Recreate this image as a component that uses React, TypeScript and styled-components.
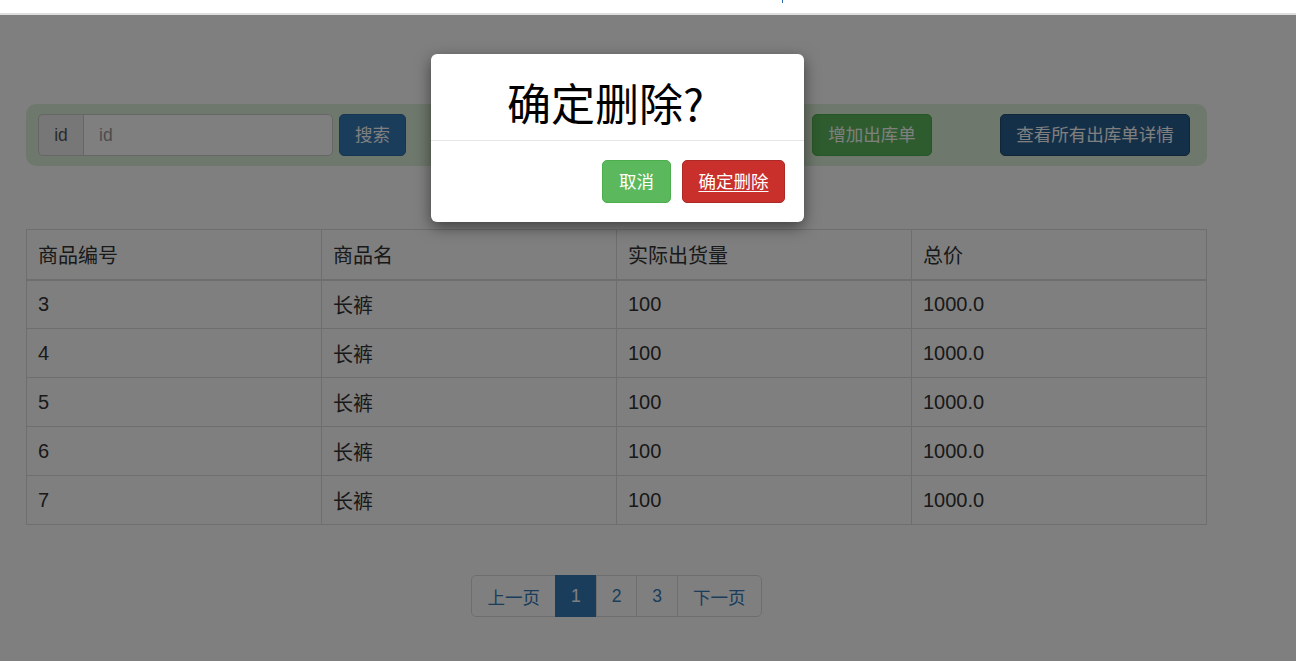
import React from 'react'
import styled, { createGlobalStyle } from 'styled-components'

const GlobalStyle = createGlobalStyle`
  html, body {
    margin: 0;
    padding: 0;
    background: #fff;
    font-family: "Liberation Sans", "Noto Sans CJK SC", sans-serif;
    color: #333;
    overflow: hidden;
  }
  * { box-sizing: border-box; }
`

const rows = [
    { id: 3, name: '长裤', qty: 100, total: '1000.0' },
    { id: 4, name: '长裤', qty: 100, total: '1000.0' },
    { id: 5, name: '长裤', qty: 100, total: '1000.0' },
    { id: 6, name: '长裤', qty: 100, total: '1000.0' },
    { id: 7, name: '长裤', qty: 100, total: '1000.0' },
]

const App = () => {
    const mapRows = rows.map((item) => {
        return (
            <tr key={item.id}>
                <Td>{item.id}</Td>
                <Td>{item.name}</Td>
                <Td>{item.qty}</Td>
                <Td>{item.total}</Td>
            </tr>
        )
    })

    return (
        <>
            <GlobalStyle />
            <TopStrip>
                <Caret />
            </TopStrip>
            <Stage>
                <Content>
                    <Well>
                        <InputGroup>
                            <Addon>id</Addon>
                            <Input placeholder="id" />
                        </InputGroup>
                        <SearchBtn variant="primary">搜索</SearchBtn>
                        <AddBtn variant="success">增加出库单</AddBtn>
                        <DetailBtn variant="dark">查看所有出库单详情</DetailBtn>
                    </Well>
                    <Table>
                        <thead>
                            <tr>
                                <Th>商品编号</Th>
                                <Th>商品名</Th>
                                <Th>实际出货量</Th>
                                <Th>总价</Th>
                            </tr>
                        </thead>
                        <tbody>{mapRows}</tbody>
                    </Table>
                    <Pager>
                        <PageItem>上一页</PageItem>
                        <PageItem active>1</PageItem>
                        <PageItem>2</PageItem>
                        <PageItem>3</PageItem>
                        <PageItem>下一页</PageItem>
                    </Pager>
                </Content>
                <Backdrop />
                <Modal>
                    <ModalHeader>
                        <ModalTitle>确定删除?</ModalTitle>
                    </ModalHeader>
                    <ModalFooter>
                        <Btn variant="success">取消</Btn>
                        <DangerBtn>确定删除</DangerBtn>
                    </ModalFooter>
                </Modal>
            </Stage>
        </>
    )
}

export default App


const TopStrip = styled.div`
  height: 15px;
  background: #fff;
  border-bottom: 2px solid #dedede;
  padding-left: 782px;
`;

const Caret = styled.span`
  display: block;
  width: 1px;
  height: 3px;
  background: #2a6ab0;
`;

const Stage = styled.div`
  position: relative;
  height: 646px;
  overflow: hidden;
`;

const Content = styled.div`
  padding: 89px 0 0 26px;
  width: 1207px;
`;

const Well = styled.div`
  display: flex;
  align-items: center;
  height: 62px;
  padding: 0 17px 0 12px;
  background: #dff0d8;
  border-radius: 10px;
`;

const InputGroup = styled.div`
  display: flex;
  width: 295px;
  height: 42px;
`;

const Addon = styled.span`
  display: flex;
  align-items: center;
  justify-content: center;
  width: 45px;
  background: #eee;
  border: 1px solid #ccc;
  border-right: 0;
  border-radius: 5px 0 0 5px;
  color: #555;
  font-size: 17.5px;
`;

const Input = styled.input`
  flex: 1;
  min-width: 0;
  border: 1px solid #ccc;
  border-radius: 0 5px 5px 0;
  padding: 0 15px;
  font-family: inherit;
  font-size: 17.5px;
  color: #555;
  background: #fff;
  outline: none;
  &::placeholder {
    color: #999;
  }
`;

const colors = {
    primary: ['#337ab7', '#2e6da4'],
    success: ['#5cb85c', '#4cae4c'],
    dark: ['#286090', '#204d74'],
}

const Btn = styled.button<{ variant: 'primary' | 'success' | 'dark' }>`
  height: 43px;
  padding: 0 16px 2px;
  border-radius: 5px;
  border: 1px solid ${p => colors[p.variant][1]};
  background: ${p => colors[p.variant][0]};
  color: #fff;
  font-family: inherit;
  font-size: 17.5px;
  cursor: pointer;
`;

const SearchBtn = styled(Btn)`
  height: 42px;
  width: 67px;
  padding: 0 0 3px;
  margin-left: 6px;
`;

const AddBtn = styled(Btn)`
  height: 42px;
  width: 120px;
  padding: 0 0 3px;
  margin-left: auto;
`;

const DetailBtn = styled(Btn)`
  height: 42px;
  width: 190px;
  padding: 0 0 3px;
  margin-left: 68px;
`;

const DangerBtn = styled.a`
  display: inline-flex;
  align-items: center;
  justify-content: center;
  height: 43px;
  width: 103px;
  margin-left: 11px;
  padding-bottom: 2px;
  border-radius: 5px;
  border: 1px solid #ac2925;
  background: #c9302c;
  color: #fff;
  font-size: 17.5px;
  text-decoration: underline;
  text-underline-offset: 3px;
`;

const Table = styled.table`
  width: 1181px;
  margin-top: 63px;
  border-collapse: collapse;
  table-layout: fixed;
  font-size: 20px;
  color: #333;
`;

const Th = styled.th`
  height: 50px;
  padding: 0 11px;
  text-align: left;
  font-weight: normal;
  border: 1px solid #ddd;
  border-bottom: 2px solid #ddd;
`;

const Td = styled.td`
  height: 49px;
  padding: 0 11px;
  border: 1px solid #ddd;
`;

const Pager = styled.div`
  display: flex;
  justify-content: center;
  margin-top: 50px;
`;

const PageItem = styled.span<{ active?: boolean }>`
  display: flex;
  align-items: center;
  height: 42px;
  padding: 0 15px;
  border: 1px solid ${p => (p.active ? '#337ab7' : '#ddd')};
  margin-left: -1px;
  background: ${p => (p.active ? '#337ab7' : '#fff')};
  color: ${p => (p.active ? '#fff' : '#337ab7')};
  font-size: 17.5px;
  &:first-child {
    margin-left: 0;
    border-radius: 5px 0 0 5px;
  }
  &:last-child {
    border-radius: 0 5px 5px 0;
  }
`;

const Backdrop = styled.div`
  position: absolute;
  inset: 0;
  z-index: 10;
  background: rgba(0, 0, 0, 0.5);
`;

const Modal = styled.div`
  position: absolute;
  z-index: 11;
  top: 39px;
  left: 431px;
  width: 373px;
  background: #fff;
  border-radius: 6px;
  box-shadow: 0 5px 15px rgba(0, 0, 0, 0.5);
`;

const ModalHeader = styled.div`
  height: 87px;
  border-bottom: 1px solid #e5e5e5;
  display: flex;
  align-items: center;
  justify-content: center;
  padding: 10px 24px 0 0;
`;

const ModalTitle = styled.h3`
  margin: 0;
  font-family: "Noto Sans CJK SC", sans-serif;
  font-size: 44px;
  font-weight: normal;
  color: #000;
  line-height: 1;
`;

const ModalFooter = styled.div`
  display: flex;
  justify-content: flex-end;
  padding: 19px;
`;
